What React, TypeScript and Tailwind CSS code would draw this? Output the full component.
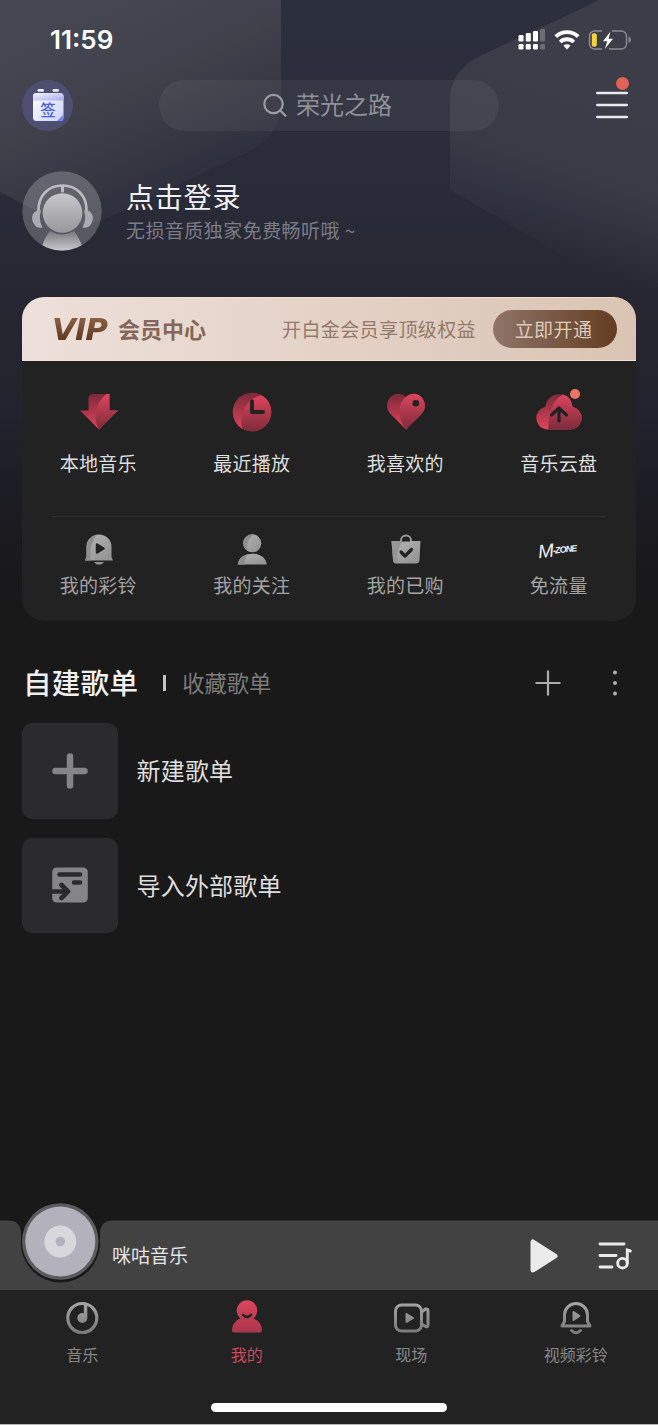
import type { ReactNode } from "react";
import clsx from "clsx";

// Gradients shared by all the icons
function Gradients() {
  return (
    <svg className="absolute h-0 w-0" aria-hidden="true">
      <defs>
        <linearGradient id="redUp" x1="0" y1="0" x2="0" y2="1">
          <stop offset="0" stopColor="#7c2a3a" />
          <stop offset="1" stopColor="#e2435c" />
        </linearGradient>
        <linearGradient id="redDown" x1="0" y1="0" x2="0" y2="1">
          <stop offset="0" stopColor="#de445c" />
          <stop offset="1" stopColor="#7c2c3b" />
        </linearGradient>
        <linearGradient id="redTab" x1="0" y1="0" x2="0" y2="1">
          <stop offset="0" stopColor="#dc465d" />
          <stop offset="1" stopColor="#a8364a" />
        </linearGradient>
        <linearGradient id="silver" x1="0" y1="0" x2="1" y2="1">
          <stop offset="0" stopColor="#b5b5b5" />
          <stop offset="1" stopColor="#909090" />
        </linearGradient>
        <linearGradient id="grayTab" x1="0" y1="0" x2="0" y2="40" gradientUnits="userSpaceOnUse">
          <stop offset="0" stopColor="#adadad" />
          <stop offset="1" stopColor="#727272" />
        </linearGradient>
        <linearGradient id="avatar" x1="0" y1="0" x2="0" y2="1">
          <stop offset="0" stopColor="#c8c8cb" />
          <stop offset="1" stopColor="#97979c" />
        </linearGradient>
        <linearGradient id="neck" x1="0" y1="0" x2="0" y2="1">
          <stop offset="0" stopColor="#77777d" />
          <stop offset="1" stopColor="#cbcbce" />
        </linearGradient>
      </defs>
    </svg>
  );
}

function Backdrop() {
  return (
    <svg className="absolute left-0 top-0" width="658" height="640" viewBox="0 0 658 640">
      <defs>
        <linearGradient id="bg" x1="0" y1="0" x2="0" y2="1">
          <stop offset="0" stopColor="#2c2f3d" />
          <stop offset="0.3" stopColor="#292b38" />
          <stop offset="0.55" stopColor="#25252f" />
          <stop offset="0.65" stopColor="#22232e" />
          <stop offset="0.78" stopColor="#1c1c23" />
          <stop offset="0.9" stopColor="#19191b" />
          <stop offset="1" stopColor="#191919" />
        </linearGradient>
        <linearGradient id="leftShape" x1="90" y1="0" x2="185" y2="205" gradientUnits="userSpaceOnUse">
          <stop offset="0" stopColor="#444751" />
          <stop offset="0.45" stopColor="#40404b" />
          <stop offset="0.75" stopColor="#353642" />
          <stop offset="1" stopColor="#2b2d3a" />
        </linearGradient>
        <linearGradient id="rightShape" x1="600" y1="90" x2="545" y2="255" gradientUnits="userSpaceOnUse">
          <stop offset="0" stopColor="#3c3d49" />
          <stop offset="0.5" stopColor="#393a46" />
          <stop offset="1" stopColor="#3c3d49" stopOpacity="0" />
        </linearGradient>
      </defs>
      <rect width="658" height="640" fill="url(#bg)" />
      <path d="M0 0H281V100Q281 137 250 151L105 219Q76 232 48 217L0 192Z" fill="url(#leftShape)" />
      <path d="M658 0H600L482 55Q450 70 450 100V190L658 310Z" fill="url(#rightShape)" />
    </svg>
  );
}

function StatusBar() {
  return (
    <div className="flex h-[79px] items-center justify-between pl-[50px] pr-[27px]">
      <span className="font-[Inter,sans-serif] text-[26px] font-semibold leading-none text-white">11:59</span>
      <svg width="113" height="26" viewBox="0 0 113 26" fill="#fff">
        <rect x="0.5" y="8" width="5" height="6.5" rx="1.3" />
        <rect x="7.8" y="6" width="5" height="8.5" rx="1.3" />
        <rect x="15" y="4" width="5" height="10.5" rx="1.3" />
        <rect x="22" y="2" width="5" height="12.5" rx="1.3" opacity="0.25" />
        <rect x="0.5" y="17" width="5" height="5.5" rx="1.3" />
        <rect x="7.8" y="17" width="5" height="5.5" rx="1.3" />
        <rect x="15" y="17" width="5" height="5.5" rx="1.3" />
        <rect x="22" y="17" width="5" height="5.5" rx="1.3" opacity="0.25" />
        <g fill="none" stroke="#fff" strokeWidth="3.8">
          <path d="M37.8 9.6a16.2 16.2 0 0 1 22.4 0" />
          <path d="M42.2 15a9.8 9.8 0 0 1 13.6 0" />
        </g>
        <path d="M45.5 18.8a5 5 0 0 1 7 0L49 22.5z" />
        <path
          d="M84 4H76.5a5 5 0 0 0-5 5V17a5 5 0 0 0 5 5H84M94 4H103.5a5 5 0 0 1 5 5V17a5 5 0 0 1-5 5H91"
          fill="none"
          stroke="#8b8c93"
          strokeWidth="1.4"
        />
        <path d="M110.5 9.5v6.5q2.5-1 2.5-3.2t-2.5-3.3z" fill="#8b8c93" />
        <rect x="73.8" y="6.2" width="5" height="13.6" rx="2" fill="#f5d33f" />
        <path d="M92.5 4.5L85 14.3H89.3L86.8 22L95 11.8H90.5z" />
      </svg>
    </div>
  );
}

function Header() {
  return (
    <header className="mt-[0.5px] flex h-[51px] items-center pl-[22px] pr-[30px]">
      <div className="flex h-[51px] w-[51px] items-center justify-center rounded-full bg-[#4e4e70]">
        <svg width="32" height="34" viewBox="0 0 32 34">
          <defs>
            <linearGradient id="cal" x1="0" y1="0" x2="1" y2="1">
              <stop offset="0" stopColor="#fff" />
              <stop offset="1" stopColor="#cdd2ff" />
            </linearGradient>
            <linearGradient id="calTop" x1="0" y1="0" x2="1" y2="1">
              <stop offset="0" stopColor="#f2f2fd" />
              <stop offset="1" stopColor="#a9adea" />
            </linearGradient>
          </defs>
          <rect x="5.5" y="1" width="6.5" height="2.8" rx="1.4" fill="#eeefff" />
          <rect x="20.5" y="1" width="6.5" height="2.8" rx="1.4" fill="#eeefff" />
          <rect x="1" y="5" width="30.5" height="28" rx="3.5" fill="url(#cal)" />
          <path d="M4.5 5H28a3.5 3.5 0 0 1 3.5 3.5V12.5H1V8.5A3.5 3.5 0 0 1 4.5 5z" fill="url(#calTop)" />
          <path d="M31.5 26.5L25 33H28a3.5 3.5 0 0 0 3.5-3.5z" fill="#7880ee" />
          <text x="16" y="27.5" textAnchor="middle" fontSize="15.5" fontWeight="500" fill="#4660e0">
            签
          </text>
        </svg>
      </div>
      <div className="ml-[86px] flex h-[51px] w-[340px] items-center justify-center gap-2 rounded-full bg-white/5 pb-px pr-1">
        <svg width="26" height="26" viewBox="0 0 26 26" fill="none" stroke="#9b9ca2" strokeWidth="2.2">
          <circle cx="11.5" cy="12" r="9.2" />
          <path d="M18.5 18.8L23.5 23.8" strokeLinecap="round" />
        </svg>
        <span className="-mt-px text-[24px] leading-none text-[#8f9098]">荣光之路</span>
      </div>
      <div className="relative ml-auto">
        <svg className="block" width="32" height="28" viewBox="0 0 32 28" stroke="#e9e9ec" strokeWidth="2.4" strokeLinecap="round">
          <path d="M1.2 2H30.8M1.2 14H30.8M1.2 26H30.8" />
        </svg>
        <span className="absolute -top-[14px] left-[20px] h-[13px] w-[13px] rounded-full bg-[#e06156]" />
      </div>
    </header>
  );
}

function Profile() {
  return (
    <section className="mt-[40.5px] flex h-20 items-center pl-[22px]">
      <svg width="80" height="80" viewBox="0 0 80 80">
        <clipPath id="avatarClip">
          <circle cx="40" cy="40" r="39.5" />
        </clipPath>
        <circle cx="40" cy="40" r="39.7" fill="#fff" opacity="0.22" />
        <g clipPath="url(#avatarClip)">
          <path d="M28 60Q40 67 52 60Q57 66 60 75V80H20V75Q23 66 28 60z" fill="url(#neck)" />
          <circle cx="40.5" cy="42" r="19.8" fill="url(#avatar)" />
          <path d="M16.5 40C16 24 27 14.5 40.5 14.5S65 24 64.5 40" fill="none" stroke="#bdbdc1" strokeWidth="2.6" />
          <rect x="39" y="14" width="3" height="7.5" rx="1" fill="#bdbdc1" />
          <path d="M16.5 39C9 41 9 49 12 53Q15 58 20.5 56.5Q16 48 19 39.5z" fill="#abacb1" />
          <path d="M64.5 39C72 41 72 49 69 53Q66 58 60.5 56.5Q65 48 62 39.5z" fill="#abacb1" />
        </g>
      </svg>
      <div className="-mt-px ml-6">
        <h1 className="text-[28px] leading-[38px] tracking-[0.8px] text-[#f1f1f3]">点击登录</h1>
        <p className="text-[19px] leading-[29px] tracking-[0.45px] text-[#7b7c85]">无损音质独家免费畅听哦 ~</p>
      </div>
    </section>
  );
}

function VipBanner() {
  return (
    <div className="flex h-16 items-center border-y border-[#f1dfd2] bg-linear-to-r from-[#ede0da] via-[#e4d2c6] to-[#dac4b4] pl-[30px] pr-[19px]">
      <span className="mt-px bg-linear-to-b from-[#92684a] to-[#55321a] bg-clip-text pr-1 font-['DejaVu_Sans',sans-serif] text-[31px] font-bold italic leading-none tracking-[-1.1px] text-transparent">
        VIP
      </span>
      <span className="-mt-[2px] ml-[7px] text-[22px] font-bold leading-none text-[#84665b]">会员中心</span>
      <span className="-mt-[2px] ml-auto text-[19px] leading-none tracking-[0.4px] text-[#93786c]">开白金会员享顶级权益</span>
      <button className="ml-[17px] h-[38px] w-[124px] rounded-full bg-linear-to-r from-[#90756a] to-[#633d20] pb-px pr-[3px] text-[19px] leading-none tracking-[0.4px] text-[#decbbd]">
        立即开通
      </button>
    </div>
  );
}

function DownloadIcon() {
  return (
    <svg width="44" height="44" viewBox="0 0 44 44">
      <path d="M16 4H32.5V20.5H41L22 39.5L3 20.5H11.5V8.5A4.5 4.5 0 0 1 16 4z" fill="url(#redUp)" />
      <path d="M32.5 4V20.5H41L22 39.5C16.5 31 17 12 30 4z" fill="url(#redDown)" />
    </svg>
  );
}

function RecentIcon() {
  return (
    <svg width="44" height="44" viewBox="0 0 44 44">
      <circle cx="22" cy="22" r="19.3" fill="url(#redUp)" />
      <path d="M31.5 5.2A19.3 19.3 0 0 1 12.5 38.8C8 24 17 8 31.5 5.2z" fill="url(#redDown)" />
      <path d="M22 11.5V22H33" fill="none" stroke="#222" strokeWidth="4" strokeLinecap="round" strokeLinejoin="round" />
    </svg>
  );
}

function HeartIcon() {
  return (
    <svg width="44" height="44" viewBox="0 0 44 44">
      <path d="M22 39.5L6.5 24C-3.5 13 10.5 -3 22 7C33.5 -3 47.5 13 37.5 24z" fill="url(#redUp)" />
      <path d="M22 39.5C15 31 12 15 22 7C33.5 -3 47.5 13 37.5 24z" fill="url(#redDown)" />
      <circle cx="31.8" cy="13.3" r="3.3" fill="#222" />
    </svg>
  );
}

function CloudIcon() {
  return (
    <span className="relative flex">
      <svg width="50" height="44" viewBox="0 0 50 44">
        <path
          d="M12.5 39.5A11.5 11.5 0 0 1 11.5 16.8C13 0 37 0 38.5 16.8A11.5 11.5 0 0 1 37.5 39.5z"
          fill="url(#redUp)"
        />
        <path d="M32.5 5.7Q38 9.5 38.5 16.8A11.5 11.5 0 0 1 37.5 39.5H14.5C14 24 18 10 29 4.5z" fill="url(#redDown)" />
        <path
          d="M25 31V19M17.5 25L25 18L32.5 25"
          fill="none"
          stroke="#222"
          strokeWidth="3.2"
          strokeLinecap="round"
          strokeLinejoin="round"
        />
      </svg>
      <span className="absolute -top-px left-[36px] h-[10px] w-[10px] rounded-full bg-[#ec7366]" />
    </span>
  );
}

function RingIcon() {
  return (
    <svg width="32" height="32" viewBox="0 0 32 32">
      <path d="M3.5 24V13.5A12.5 12 0 0 1 28.5 13.5V24L30 27.5H2z" fill="url(#silver)" />
      <path d="M3.5 24V13.5A12.5 12 0 0 1 14 1.7C8 9 6.5 19 8 27.5H2z" fill="#8e8e8e" />
      <path d="M14 11.5L20.5 15.5L14 19.5z" fill="#222" stroke="#222" strokeWidth="2.5" strokeLinejoin="round" />
      <path d="M11 29H21Q19.5 31.7 16 31.7T11 29z" fill="#909090" />
    </svg>
  );
}

function FollowIcon() {
  return (
    <svg width="32" height="32" viewBox="0 0 32 32">
      <circle cx="16.3" cy="10.3" r="9" fill="url(#silver)" />
      <path d="M12 18.3A9 9 0 0 1 18 1.5C12 6 9.5 12 12 18.3z" fill="#8e8e8e" />
      <path d="M1.8 31.5C3 17 29.5 17 30.8 31.5z" fill="url(#silver)" />
      <path d="M1.8 31.5Q3 23 12 21Q8 26 9 31.5z" fill="#8e8e8e" />
    </svg>
  );
}

function BagIcon() {
  return (
    <svg width="32" height="32" viewBox="0 0 32 32">
      <path d="M11.3 10V7.5a4.7 4.7 0 0 1 9.4 0V10" fill="none" stroke="#9a9a9a" strokeWidth="2.6" />
      <path d="M1.5 8H30.5L29.5 27Q29.3 30.5 26 30.5H6.5Q3.2 30.5 3 27z" fill="url(#silver)" />
      <path d="M1.5 8H13Q5 18 8 30.5H6.5Q3.2 30.5 3 27z" fill="#8e8e8e" opacity="0.7" />
      <path d="M12 8.5V7a4 3.5 0 0 1 8 0V8.5z" fill="#222" />
      <path
        d="M11 19L15 23L21.5 16.5"
        fill="none"
        stroke="#222"
        strokeWidth="3.2"
        strokeLinecap="round"
        strokeLinejoin="round"
      />
    </svg>
  );
}

function ZoneLogo() {
  return (
    <span className="-rotate-6 whitespace-nowrap pr-1 font-['Liberation_Sans',sans-serif] text-[19px] italic leading-none tracking-[-1px] text-[#f1f1f1]">
      M<span className="align-[3px] text-[9px] font-bold tracking-[-0.9px]">-ZONE</span>
    </span>
  );
}

interface Shortcut {
  label: string;
  icon: ReactNode;
}

const mainShortcuts: Shortcut[] = [
  { label: "本地音乐", icon: <DownloadIcon /> },
  { label: "最近播放", icon: <RecentIcon /> },
  { label: "我喜欢的", icon: <HeartIcon /> },
  { label: "音乐云盘", icon: <CloudIcon /> },
];

const subShortcuts: Shortcut[] = [
  { label: "我的彩铃", icon: <RingIcon /> },
  { label: "我的关注", icon: <FollowIcon /> },
  { label: "我的已购", icon: <BagIcon /> },
  { label: "免流量", icon: <ZoneLogo /> },
];

function ShortcutCard() {
  return (
    <section className="mx-[22px] mt-[46px] h-[324px] overflow-hidden rounded-[22px] bg-[#222222]">
      <VipBanner />
      <div className="grid h-[155px] grid-cols-4 pt-[29px]">
        {mainShortcuts.map((item) => (
          <div key={item.label} className="flex flex-col items-center">
            <div className="flex h-11 items-center">{item.icon}</div>
            <span className="mt-[15px] pr-px text-[19px] leading-7 tracking-[0.3px] text-[#dedede]">{item.label}</span>
          </div>
        ))}
      </div>
      <div className="mx-[30px] h-px bg-[#303030]" />
      <div className="grid grid-cols-4 pt-4">
        {subShortcuts.map((item) => (
          <div key={item.label} className="flex flex-col items-center">
            <div className="flex h-8 items-center">{item.icon}</div>
            <span className="mt-[6px] pr-px text-[19px] leading-7 tracking-[0.3px] text-[#a3a3a3]">{item.label}</span>
          </div>
        ))}
      </div>
    </section>
  );
}

function Playlists() {
  return (
    <section className="px-[22px] pt-[42px]">
      <div className="flex h-10 items-center">
        <h2 className="-mt-px ml-px text-[28.5px] font-medium leading-none tracking-[0.3px] text-[#f0f0f0]">自建歌单</h2>
        <span className="ml-[25px] h-4 w-[3px] bg-[#c4c4c4]" />
        <span className="-mt-[2px] ml-4 text-[22.3px] leading-none text-[#7b7b7b]">收藏歌单</span>
        <svg className="ml-auto" width="26" height="26" viewBox="0 0 26 26" stroke="#adadad" strokeWidth="2.2">
          <path d="M13 .5V25.5M.5 13H25.5" />
        </svg>
        <svg className="ml-[51px] mr-[18px]" width="6" height="26" viewBox="0 0 6 26" fill="#adadad">
          <circle cx="3" cy="2.5" r="2" />
          <circle cx="3" cy="13" r="2" />
          <circle cx="3" cy="23.5" r="2" />
        </svg>
      </div>
      <div className="mt-5 flex flex-col gap-[19px]">
        <div className="flex items-center gap-[19px]">
          <div className="flex h-[95.5px] w-[95.5px] items-center justify-center rounded-[10px] bg-[#2b2b2d]">
            <svg width="36" height="36" viewBox="0 0 36 36" stroke="#858587" strokeWidth="6.5" strokeLinecap="round">
              <path d="M18 3.5V32.5M3.5 18H32.5" />
            </svg>
          </div>
          <span className="-mt-px text-[24px] leading-none tracking-[0.2px] text-[#dedede]">新建歌单</span>
        </div>
        <div className="flex items-center gap-[19px]">
          <div className="flex h-[95.5px] w-[95.5px] items-center justify-center rounded-[10px] bg-[#2b2b2d]">
            <svg width="36" height="36" viewBox="0 0 36 36">
              <rect x="0.2" y="0.5" width="35.6" height="35" rx="4.5" fill="#858587" />
              <g fill="none" stroke="#2b2b2d" strokeWidth="4.6" strokeLinecap="round" strokeLinejoin="round">
                <path d="M7.5 7.5H28M22 15.5H28" />
                <path d="M-3 24.5H14M9.5 18L16 24.5L9.5 31" />
              </g>
            </svg>
          </div>
          <span className="-mt-px text-[24px] leading-none tracking-[0.2px] text-[#dedede]">导入外部歌单</span>
        </div>
      </div>
    </section>
  );
}

function Player() {
  return (
    <section className="relative flex h-[70px] items-center pl-[112px] pr-[26px]">
      {/* bar with a notch where the disc sits */}
      <svg className="absolute -top-[18px] left-0" width="658" height="88" viewBox="0 0 658 88">
        <path d="M0 18.5H8Q20 18.5 21 30V88H0zM658 18.5H113Q101 18.5 100 30V88H658z" fill="#424242" />
        <rect x="20" y="45" width="81" height="43" fill="#424242" />
        <path d="M21 30V41A39.5 39.5 0 0 0 100 41V30z" fill="#191919" />
        <circle cx="60.3" cy="39.5" r="38.3" fill="#5c5c5e" />
        <circle cx="60.3" cy="39.5" r="35" fill="#b3b1bb" />
        <circle cx="60.3" cy="39.5" r="16" fill="#d8d7dc" />
        <circle cx="60.3" cy="39.5" r="4.8" fill="#b3b1bb" />
      </svg>
      <span className="relative -mt-px text-[19px] leading-none text-[#e4e4e4]">咪咕音乐</span>
      <svg className="relative ml-auto mt-[2px]" width="28" height="34" viewBox="0 0 28 34">
        <path d="M3 3V31L25 17z" fill="#ebebeb" stroke="#ebebeb" strokeWidth="5" strokeLinejoin="round" />
      </svg>
      <svg
        className="relative ml-10 mt-[2px]"
        width="34"
        height="28"
        viewBox="0 0 34 28"
        fill="none"
        stroke="#ebebeb"
        strokeWidth="2.9"
        strokeLinecap="round"
      >
        <path d="M2 2H26M2 13.5H18M2 25H14" />
        <circle cx="24.5" cy="21.2" r="4.8" />
        <path d="M29.3 21V8L32.3 9" />
      </svg>
    </section>
  );
}

interface Tab {
  label: string;
  icon: ReactNode;
  active?: boolean;
}

const tabs: Tab[] = [
  {
    label: "音乐",
    icon: (
      <svg width="40" height="40" viewBox="0 0 40 40">
        <circle cx="20.3" cy="20" r="14.5" fill="none" stroke="url(#grayTab)" strokeWidth="3.2" />
        <circle cx="20.3" cy="20" r="5" fill="url(#grayTab)" />
        <path d="M21.8 6H25.3V20H21.8z" fill="url(#grayTab)" />
      </svg>
    ),
  },
  {
    label: "我的",
    active: true,
    icon: (
      <svg width="40" height="40" viewBox="0 0 40 40">
        <path
          d="M13.5 20.5A10.3 10.3 0 1 1 26.5 20.5C32 22.5 35 27 35 32.5Q35 34.5 33 34.5H7Q5 34.5 5 32.5C5 27 8 22.5 13.5 20.5z"
          fill="url(#redTab)"
        />
        <path d="M16 16.8Q20 21 24 16.8" fill="none" stroke="#222" strokeWidth="2.6" strokeLinecap="round" />
      </svg>
    ),
  },
  {
    label: "现场",
    icon: (
      <svg width="40" height="40" viewBox="0 0 40 40" fill="none" stroke="url(#grayTab)" strokeWidth="3">
        <rect x="4.5" y="7" width="26" height="26" rx="6" />
        <path d="M31 13.8L34.5 11Q37 10.5 37 13V27Q37 29.5 34.5 28.5L31 26.2" strokeLinejoin="round" />
        <path d="M15.5 16V24L22 20z" fill="url(#grayTab)" strokeWidth="2" strokeLinejoin="round" />
      </svg>
    ),
  },
  {
    label: "视频彩铃",
    icon: (
      <svg
        width="40"
        height="40"
        viewBox="0 0 40 40"
        fill="none"
        stroke="url(#grayTab)"
        strokeWidth="3"
        strokeLinecap="round"
        strokeLinejoin="round"
      >
        <path d="M8.5 23.5V17A11.5 11.5 0 0 1 31.5 17V23.5L34 28H6z" />
        <path d="M17.5 14V22L23.5 18z" fill="url(#grayTab)" strokeWidth="2" />
        <path d="M15.5 32.5Q20 37 24.5 32.5" />
      </svg>
    ),
  },
];

function TabBar() {
  return (
    <nav className="flex h-[135px] flex-col items-center border-b border-[#b5b5b5] bg-[#222222]">
      <div className="grid w-full grid-cols-4 pt-2">
        {tabs.map((tab) => (
          <div key={tab.label} className="flex flex-col items-center">
            {tab.icon}
            <span className={clsx("mt-[4px] text-[16px] leading-6", tab.active ? "text-[#d3455a]" : "text-[#868686]")}>
              {tab.label}
            </span>
          </div>
        ))}
      </div>
      <div className="mt-[37px] h-[9px] w-[236px] rounded-full bg-white" />
    </nav>
  );
}

export default function App() {
  return (
    <div className="relative h-[1425px] w-[658px] overflow-hidden bg-[#191919] font-['Noto_Sans_CJK_SC','Noto_Sans_CJK_TC',sans-serif]">
      <Gradients />
      <Backdrop />
      <div className="relative flex h-full flex-col">
        <StatusBar />
        <Header />
        <Profile />
        <ShortcutCard />
        <Playlists />
        <div className="mt-auto">
          <Player />
          <TabBar />
        </div>
      </div>
    </div>
  );
}
